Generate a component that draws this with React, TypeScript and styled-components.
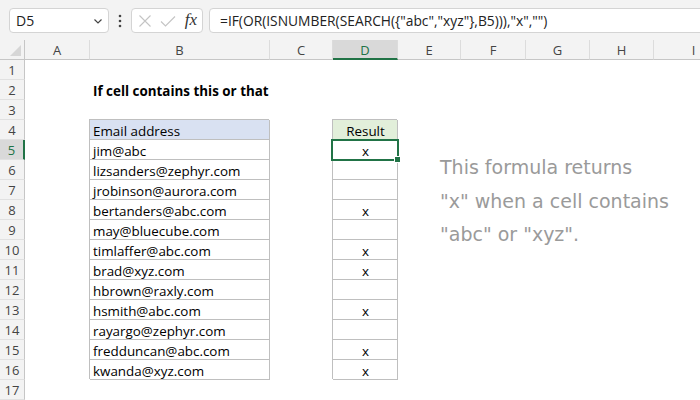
import React from 'react';
import styled, { createGlobalStyle, css } from 'styled-components';

const GlobalStyle = createGlobalStyle`
  html, body {
    margin: 0;
    padding: 0;
    background: #fff;
  }
  body {
    width: 700px;
    height: 400px;
    overflow: hidden;
    font-family: 'Open Sans', 'Noto Sans', sans-serif;
  }
`;

const GREEN = '#217346';
const GRID_LINE = '#bfbfbf';

const columns = [
  { key: 'A', width: 65 },
  { key: 'B', width: 180 },
  { key: 'C', width: 63 },
  { key: 'D', width: 65 },
  { key: 'E', width: 63 },
  { key: 'F', width: 65 },
  { key: 'G', width: 64 },
  { key: 'H', width: 64 },
  { key: 'I', width: 80 },
];

type Fill = 'blue' | 'green' | 'plain';

type CellData = {
  text?: string,
  fill?: Fill,
  align?: 'left' | 'center',
  bold?: boolean,
  selected?: boolean,
};

const emails: Array<[string, string]> = [
  ['jim@abc', 'x'],
  ['lizsanders@zephyr.com', ''],
  ['jrobinson@aurora.com', ''],
  ['bertanders@abc.com', 'x'],
  ['may@bluecube.com', ''],
  ['timlaffer@abc.com', 'x'],
  ['brad@xyz.com', 'x'],
  ['hbrown@raxly.com', ''],
  ['hsmith@abc.com', 'x'],
  ['rayargo@zephyr.com', ''],
  ['fredduncan@abc.com', 'x'],
  ['kwanda@xyz.com', 'x'],
];

function buildRow (row: number): Record<string, CellData> {
  if (row === 2) {
    return { B: { text: 'If cell contains this or that', bold: true } };
  }

  if (row === 4) {
    return {
      B: { text: 'Email address', fill: 'blue' },
      D: { text: 'Result', fill: 'green', align: 'center' }
    };
  }

  if (row >= 5 && row <= 16) {
    const [email, result] = emails[row - 5];

    return {
      B: { text: email, fill: 'plain' },
      D: { text: result, fill: 'plain', align: 'center', selected: row === 5 }
    };
  }

  return {};
}

const Toolbar = styled.div`
  height: 40px;
  box-sizing: border-box;
  background: #f3f3f3;
  display: flex;
  align-items: center;
  padding: 1px 0 0 9px;
  overflow: hidden;
`;

const BoxBase = css`
  height: 25px;
  box-sizing: border-box;
  border: 1px solid #d4d4d4;
  border-radius: 4px;
  background: #fff;
  display: flex;
  align-items: center;
`;

const NameBox = styled.div`
  ${BoxBase};
  width: 100px;
  justify-content: space-between;
  padding: 0 5px 0 6px;
  font-size: 14px;
  color: #222;
`;

const Dots = styled.div`
  width: 22px;
  display: flex;
  justify-content: center;
`;

const FxBox = styled.div`
  ${BoxBase};
  width: 72px;
  justify-content: space-between;
  padding: 0 5px 0 6px;
`;

const FxText = styled.span`
  font-family: 'Liberation Serif', 'DejaVu Serif', serif;
  font-style: italic;
  font-size: 17px;
  color: #333;
  margin-top: -2px;
`;

const FormulaBox = styled.div`
  ${BoxBase};
  flex: 1;
  margin-left: 6px;
  margin-right: -20px;
  padding-left: 10px;
  font-size: 13.8px;
  color: #222;
  white-space: nowrap;
`;

const Sheet = styled.div`
  position: relative;
  display: grid;
  grid-template-columns: 25px ${columns.map((c) => `${c.width}px`).join(' ')};
  grid-auto-rows: 20px;
  background: #fff;
`;

const HeaderBase = css`
  box-sizing: border-box;
  background: #f3f3f3;
  color: #444;
  font-size: 13px;
  display: flex;
  align-items: center;
  justify-content: center;
`;

const Corner = styled.div`
  ${HeaderBase};
  border-right: 1px solid #c6c6c6;
  border-bottom: 1px solid #c6c6c6;
  justify-content: flex-end;
  align-items: flex-end;
  padding: 0 3px 3px 0;
`;

const ColHeader = styled.div<{ $active?: boolean }>`
  ${HeaderBase};
  border-right: 1px solid #dcdcdc;
  border-bottom: 1px solid #c6c6c6;
  padding-top: 1px;
  ${({ $active }) => $active && css`
    background: #d9d9d9;
    color: ${GREEN};
    border-bottom: 2px solid ${GREEN};
  `}
`;

const RowHeader = styled.div<{ $active?: boolean }>`
  ${HeaderBase};
  border-right: 1px solid #c6c6c6;
  border-bottom: 1px solid #e1e1e1;
  ${({ $active }) => $active && css`
    background: #d9d9d9;
    color: ${GREEN};
    border-right: 2px solid ${GREEN};
  `}
`;

const fills: Record<Fill, string> = {
  blue: '#d9e1f2',
  green: '#e2efda',
  plain: '#ffffff'
};

const Cell = styled.div<{ $fill?: Fill, $align?: 'left' | 'center', $bold?: boolean, $selected?: boolean }>`
  position: relative;
  box-sizing: border-box;
  font-size: 13.4px;
  color: #000;
  line-height: 20px;
  padding: 1px 3px 0;
  white-space: nowrap;
  overflow: visible;
  text-align: ${({ $align }) => $align || 'left'};
  font-weight: ${({ $bold }) => ($bold ? 700 : 400)};
  ${({ $fill }) => $fill && css`
    background: ${fills[$fill]};
    box-shadow: -1px -1px 0 ${GRID_LINE}, inset -1px -1px 0 ${GRID_LINE};
  `}
  ${({ $selected }) => $selected && css`
    &::after {
      content: '';
      position: absolute;
      left: -2px;
      top: -1px;
      right: -1px;
      bottom: -1px;
      border: 2px solid ${GREEN};
      z-index: 2;
    }
    &::before {
      content: '';
      position: absolute;
      right: -3px;
      bottom: -3px;
      width: 5px;
      height: 5px;
      background: ${GREEN};
      border: 1px solid #fff;
      z-index: 3;
    }
  `}
`;

const Note = styled.div`
  position: absolute;
  left: 440px;
  top: 111px;
  font-family: 'DejaVu Sans', sans-serif;
  font-size: 19px;
  line-height: 33.5px;
  color: #9a9a9a;
  white-space: nowrap;
  z-index: 4;
`;

function ChevronIcon () {
  return (
    <svg fill='none' height='10' viewBox='0 0 10 10' width='10'>
      <path d='M1.5 3.5 L5 7 L8.5 3.5' stroke='#444' strokeWidth='1.2' />
    </svg>
  );
}

function DotsIcon () {
  return (
    <svg height='14' viewBox='0 0 4 14' width='4'>
      <circle cx='2' cy='2' fill='#444' r='1.3' />
      <circle cx='2' cy='7' fill='#444' r='1.3' />
      <circle cx='2' cy='12' fill='#444' r='1.3' />
    </svg>
  );
}

function CancelIcon () {
  return (
    <svg fill='none' height='14' viewBox='0 0 14 14' width='14'>
      <path d='M1.5 1.5 L12.5 12.5 M12.5 1.5 L1.5 12.5' stroke='#c4c4c4' strokeWidth='1.1' />
    </svg>
  );
}

function CheckIcon () {
  return (
    <svg fill='none' height='14' viewBox='0 0 16 14' width='16'>
      <path d='M1 7.5 L5.5 12 L15 2.5' stroke='#c4c4c4' strokeWidth='1.1' />
    </svg>
  );
}

function CornerTriangle () {
  return (
    <svg height='11' viewBox='0 0 11 11' width='11'>
      <polygon fill='#d6d6d6' points='11,0 11,11 0,11' />
    </svg>
  );
}

export default function App () {
  const rows = Array.from({ length: 17 }, (_, i) => i + 1);

  return (
    <>
      <GlobalStyle />
      <Toolbar>
        <NameBox>
          <span>D5</span>
          <ChevronIcon />
        </NameBox>
        <Dots><DotsIcon /></Dots>
        <FxBox>
          <CancelIcon />
          <CheckIcon />
          <FxText>fx</FxText>
        </FxBox>
        <FormulaBox>{'=IF(OR(ISNUMBER(SEARCH({"abc","xyz"},B5))),"x","")'}</FormulaBox>
      </Toolbar>
      <Sheet>
        <Corner><CornerTriangle /></Corner>
        {columns.map((c) => (
          <ColHeader
            $active={c.key === 'D'}
            key={c.key}
          >
            {c.key}
          </ColHeader>
        ))}
        {rows.map((row) => {
          const data = buildRow(row);

          return (
            <React.Fragment key={row}>
              <RowHeader $active={row === 5}>{row}</RowHeader>
              {columns.map((c) => {
                const cell = data[c.key];

                return (
                  <Cell
                    $align={cell?.align}
                    $bold={cell?.bold}
                    $fill={cell?.fill}
                    $selected={cell?.selected}
                    key={c.key}
                  >
                    {cell?.text}
                  </Cell>
                );
              })}
            </React.Fragment>
          );
        })}
        <Note>
          This formula returns<br />
          "x" when a cell contains<br />
          "abc" or "xyz".
        </Note>
      </Sheet>
    </>
  );
}
